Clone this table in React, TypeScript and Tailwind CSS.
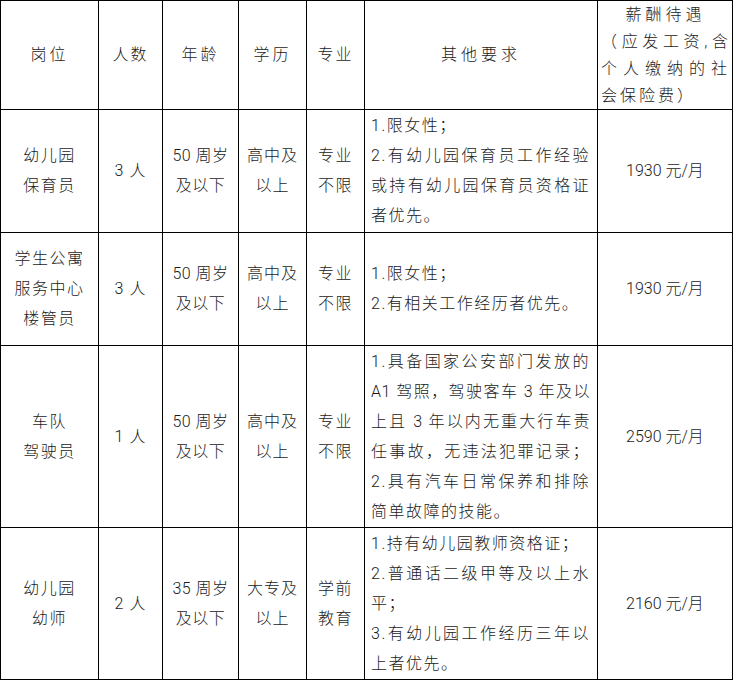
import React from "react";

const J = "text-justify [text-align-last:justify]";

type Line = { t: string; j?: boolean; c?: string };

function Lines({ lines, cls = "" }: { lines: string[]; cls?: string }) {
  return (
    <div className={cls}>
      {lines.map((l, i) => (
        <div key={i} className="h-[30px] leading-[30px] whitespace-nowrap">
          {l}
        </div>
      ))}
    </div>
  );
}

function Req({ lines }: { lines: Line[] }) {
  return (
    <div className="pl-[6px] pr-[7px] tracking-[1.5px]">
      {lines.map((l, i) => (
        <div
          key={i}
          className={`h-[30px] leading-[30px] whitespace-nowrap ${l.j ? J : "text-left"} ${l.c ?? ""}`}
        >
          {l.t}
        </div>
      ))}
    </div>
  );
}

const td = "border border-black align-middle text-center p-0";

type Row = {
  h: string;
  pos: string[];
  n: string;
  age: string[];
  edu: string[];
  major: string[];
  req: Line[];
  pay: string;
};

const rows: Row[] = [
  {
    h: "h-[123px]",
    pos: ["幼儿园", "保育员"],
    n: "3 人",
    age: ["50 周岁", "及以下"],
    edu: ["高中及", "以上"],
    major: ["专业", "不限"],
    req: [
      { t: "1.限女性；" },
      { t: "2.有幼儿园保育员工作经验", j: true },
      { t: "或持有幼儿园保育员资格证", j: true },
      { t: "者优先。" },
    ],
    pay: "1930 元/月",
  },
  {
    h: "h-[113px]",
    pos: ["学生公寓", "服务中心", "楼管员"],
    n: "3 人",
    age: ["50 周岁", "及以下"],
    edu: ["高中及", "以上"],
    major: ["专业", "不限"],
    req: [{ t: "1.限女性；" }, { t: "2.有相关工作经历者优先。" }],
    pay: "1930 元/月",
  },
  {
    h: "h-[182px]",
    pos: ["车队", "驾驶员"],
    n: "1 人",
    age: ["50 周岁", "及以下"],
    edu: ["高中及", "以上"],
    major: ["专业", "不限"],
    req: [
      { t: "1.具备国家公安部门发放的", j: true },
      { t: "A1 驾照，驾驶客车 3 年及以", j: true, c: "tracking-[0.5px]" },
      { t: "上且 3 年以内无重大行车责", j: true, c: "tracking-[0.5px]" },
      { t: "任事故，无违法犯罪记录；", j: true },
      { t: "2.具有汽车日常保养和排除", j: true },
      { t: "简单故障的技能。" },
    ],
    pay: "2590 元/月",
  },
  {
    h: "h-[152px]",
    pos: ["幼儿园", "幼师"],
    n: "2 人",
    age: ["35 周岁", "及以下"],
    edu: ["大专及", "以上"],
    major: ["学前", "教育"],
    req: [
      { t: "1.持有幼儿园教师资格证；" },
      { t: "2.普通话二级甲等及以上水", j: true },
      { t: "平；" },
      { t: "3.有幼儿园工作经历三年以", j: true },
      { t: "上者优先。" },
    ],
    pay: "2160 元/月",
  },
];

export default function App() {
  return (
    <div
      className="w-[733px] h-[680px] bg-white text-[#1a1a1a] text-[16px] font-light overflow-hidden"
      style={{ fontFamily: 'Roboto, "Noto Sans CJK SC", sans-serif' }}
    >
      <table className="table-fixed border-collapse w-[733px]">
        <colgroup>
          <col className="w-[98px]" />
          <col className="w-[64px]" />
          <col className="w-[76px]" />
          <col className="w-[68px]" />
          <col className="w-[58px]" />
          <col className="w-[233px]" />
          <col className="w-[135px]" />
        </colgroup>
        <tbody>
          <tr className="h-[109px]">
            <td className={`${td} tracking-[3px]`}>岗位</td>
            <td className={`${td} tracking-[2px]`}>人数</td>
            <td className={`${td} tracking-[3px]`}>年龄</td>
            <td className={`${td} tracking-[3px]`}>学历</td>
            <td className={`${td} tracking-[2px]`}>专业</td>
            <td className={`${td} tracking-[4px]`}>其他要求</td>
            <td className={`${td}`}>
              <div className="pl-[3px] pr-[2px] tracking-[3px]">
                <div className="h-[27px] leading-[27px] text-center tracking-[4px]">薪酬待遇</div>
                <div className={`h-[27px] leading-[27px] whitespace-nowrap tracking-[2px] ${J}`}>（应发工资,含</div>
                <div className={`h-[27px] leading-[27px] whitespace-nowrap ${J}`}>个人缴纳的社</div>
                <div className="h-[27px] leading-[27px] text-left">会保险费）</div>
              </div>
            </td>
          </tr>
          {rows.map((r, i) => (
            <tr key={i} className={r.h}>
              <td className={`${td} tracking-[1.5px]`}>
                <Lines lines={r.pos} />
              </td>
              <td className={`${td} tracking-[1px]`}>{r.n}</td>
              <td className={`${td} tracking-[0.5px]`}>
                <Lines lines={r.age} />
              </td>
              <td className={`${td} tracking-[1px]`}>
                <Lines lines={r.edu} />
              </td>
              <td className={`${td} tracking-[1.5px]`}>
                <Lines lines={r.major} />
              </td>
              <td className={td}>
                <Req lines={r.req} />
              </td>
              <td className={td}>{r.pay}</td>
            </tr>
          ))}
        </tbody>
      </table>
    </div>
  );
}
